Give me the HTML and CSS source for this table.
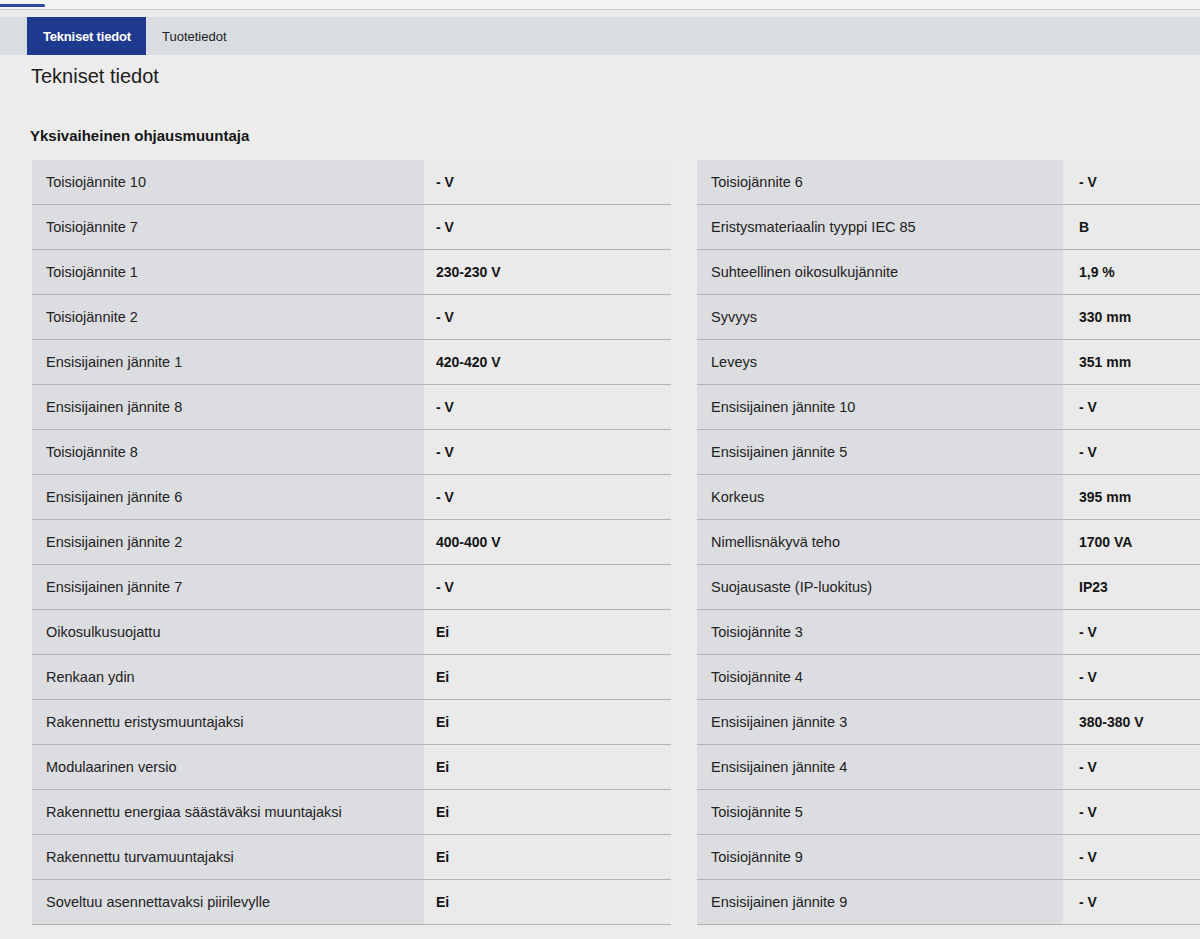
FILE: index.html
```html
<!DOCTYPE html>
<html lang="fi">
<head>
<meta charset="utf-8">
<title>Tekniset tiedot</title>
<link rel="stylesheet" href="styles.css">
</head>
<body>
<div class="page">
  <div class="topstrip"><span class="topmark"></span></div>
  <nav class="tabs">
    <span class="tab active">Tekniset tiedot</span>
    <span class="tab">Tuotetiedot</span>
  </nav>
  <h1 class="title">Tekniset tiedot</h1>
  <h2 class="subtitle">Yksivaiheinen ohjausmuuntaja</h2>
  <div class="tables">
    <div class="spec left">
      <div class="row"><div class="k">Toisiojännite 10</div><div class="v">- V</div></div>
      <div class="row"><div class="k">Toisiojännite 7</div><div class="v">- V</div></div>
      <div class="row"><div class="k">Toisiojännite 1</div><div class="v">230-230 V</div></div>
      <div class="row"><div class="k">Toisiojännite 2</div><div class="v">- V</div></div>
      <div class="row"><div class="k">Ensisijainen jännite 1</div><div class="v">420-420 V</div></div>
      <div class="row"><div class="k">Ensisijainen jännite 8</div><div class="v">- V</div></div>
      <div class="row"><div class="k">Toisiojännite 8</div><div class="v">- V</div></div>
      <div class="row"><div class="k">Ensisijainen jännite 6</div><div class="v">- V</div></div>
      <div class="row"><div class="k">Ensisijainen jännite 2</div><div class="v">400-400 V</div></div>
      <div class="row"><div class="k">Ensisijainen jännite 7</div><div class="v">- V</div></div>
      <div class="row"><div class="k">Oikosulkusuojattu</div><div class="v">Ei</div></div>
      <div class="row"><div class="k">Renkaan ydin</div><div class="v">Ei</div></div>
      <div class="row"><div class="k">Rakennettu eristysmuuntajaksi</div><div class="v">Ei</div></div>
      <div class="row"><div class="k">Modulaarinen versio</div><div class="v">Ei</div></div>
      <div class="row"><div class="k">Rakennettu energiaa säästäväksi muuntajaksi</div><div class="v">Ei</div></div>
      <div class="row"><div class="k">Rakennettu turvamuuntajaksi</div><div class="v">Ei</div></div>
      <div class="row"><div class="k">Soveltuu asennettavaksi piirilevylle</div><div class="v">Ei</div></div>
    </div>
    <div class="spec right">
      <div class="row"><div class="k">Toisiojännite 6</div><div class="v">- V</div></div>
      <div class="row"><div class="k">Eristysmateriaalin tyyppi IEC 85</div><div class="v">B</div></div>
      <div class="row"><div class="k">Suhteellinen oikosulkujännite</div><div class="v">1,9 %</div></div>
      <div class="row"><div class="k">Syvyys</div><div class="v">330 mm</div></div>
      <div class="row"><div class="k">Leveys</div><div class="v">351 mm</div></div>
      <div class="row"><div class="k">Ensisijainen jännite 10</div><div class="v">- V</div></div>
      <div class="row"><div class="k">Ensisijainen jännite 5</div><div class="v">- V</div></div>
      <div class="row"><div class="k">Korkeus</div><div class="v">395 mm</div></div>
      <div class="row"><div class="k">Nimellisnäkyvä teho</div><div class="v">1700 VA</div></div>
      <div class="row"><div class="k">Suojausaste (IP-luokitus)</div><div class="v">IP23</div></div>
      <div class="row"><div class="k">Toisiojännite 3</div><div class="v">- V</div></div>
      <div class="row"><div class="k">Toisiojännite 4</div><div class="v">- V</div></div>
      <div class="row"><div class="k">Ensisijainen jännite 3</div><div class="v">380-380 V</div></div>
      <div class="row"><div class="k">Ensisijainen jännite 4</div><div class="v">- V</div></div>
      <div class="row"><div class="k">Toisiojännite 5</div><div class="v">- V</div></div>
      <div class="row"><div class="k">Toisiojännite 9</div><div class="v">- V</div></div>
      <div class="row"><div class="k">Ensisijainen jännite 9</div><div class="v">- V</div></div>
    </div>
  </div>
</div>
</body>
</html>
```
FILE: styles.css
```css
* { box-sizing: border-box; }
html, body {
  margin: 0;
  padding: 0;
  background: #e4e4e4;
  font-family: "Liberation Sans", Arial, Helvetica, sans-serif;
  color: #1d1d1f;
}
.page {
  width: 1200px;
  height: 939px;
  overflow: hidden;
  background: #ececec;
}
.topstrip {
  height: 17px;
  border-top: 9px solid #f4f4f4;
  background: #ebebeb;
  position: relative;
  box-shadow: inset 0 1px 0 #c9c9c9;
}
.topmark {
  position: absolute;
  left: 0;
  top: -5px;
  width: 45px;
  height: 3px;
  background: #2b4aa0;
  border-radius: 0 2px 2px 0;
}
.tabs {
  height: 38px;
  background: #d9dce1;
  display: flex;
  align-items: stretch;
  padding-left: 27px;
}
.tab {
  display: flex;
  align-items: center;
  padding: 0 17px 0 16px;
  font-size: 13px;
  color: #222;
}
.tab.active {
  background: #1d3a8e;
  color: #fff;
  font-weight: bold;
  width: 119px;
  padding: 0 0 0 16px;
  letter-spacing: -0.2px;
}
.title {
  margin: 9px 0 0 31px;
  font-size: 20px;
  font-weight: normal;
  line-height: 24px;
  color: #1c1c1c;
}
.subtitle {
  margin: 39px 0 0 30px;
  font-size: 15px;
  font-weight: bold;
  line-height: 18px;
  color: #161616;
}
.tables {
  margin-top: 15px;
  display: flex;
  gap: 26px;
  padding-left: 32px;
}
.spec {
  display: flex;
  flex-direction: column;
  flex-shrink: 0;
}
.spec.left { width: 639px; }
.spec.right { width: 520px; }
.row {
  display: flex;
  height: 45px;
  border-bottom: 1px solid #b3b3b3;
  font-size: 14.5px;
}
.row .k {
  background: #dcdde0;
  display: flex;
  align-items: center;
  padding-left: 14px;
  color: #222;
}
.row .v {
  flex: 1;
  background: #eaeaea;
  display: flex;
  align-items: center;
  font-weight: bold;
  font-size: 14px;
  color: #151515;
}
.left .k { width: 392px; }
.left .v { padding-left: 12px; }
.right .k { width: 366px; }
.right .v { padding-left: 16px; }
```
